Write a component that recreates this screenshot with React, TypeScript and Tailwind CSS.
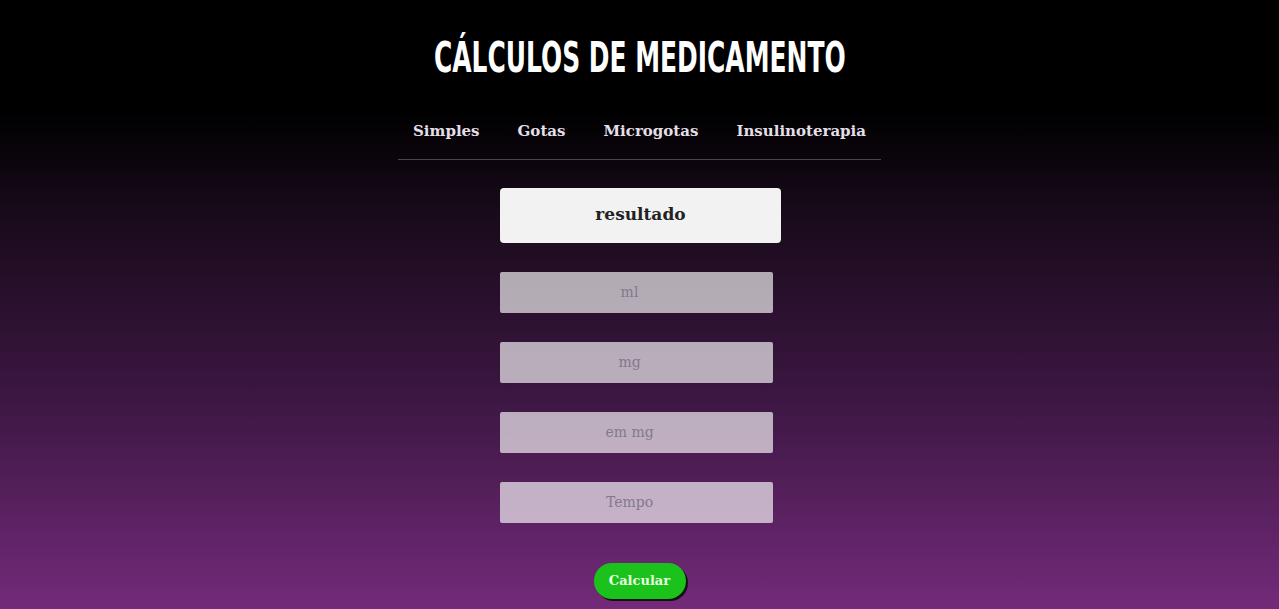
import React from "react";

const tabs = ["Simples", "Gotas", "Microgotas", "Insulinoterapia"];
const fields = ["ml", "mg", "em mg", "Tempo"];

export default function App() {
  return (
    <div className="min-h-[609px] w-full bg-[linear-gradient(to_bottom,#000000_0px,#000000_110px,#1a0b1c_220px,#3a1640_390px,#732a7a_609px)] font-['DejaVu_Serif',serif]">
      <div className="flex flex-col items-center">
        <h1 className="mt-[37px] scale-x-[0.66] font-['DejaVu_Sans_Condensed',sans-serif] text-[42px] font-bold leading-[42px] whitespace-nowrap text-white uppercase">
          Cálculos de Medicamento
        </h1>

        <nav className="mt-[41px] w-[483px] border-b border-[#4a4550] pb-[16px]">
          <ul className="flex justify-center gap-[38px] text-[15px] font-semibold text-[#e3dfe6]">
            {tabs.map((t) => (
              <li key={t}>{t}</li>
            ))}
          </ul>
        </nav>

        <div className="mt-[28px] ml-[2px] flex h-[55px] w-[281px] items-center justify-center rounded-[4px] bg-[#f2f2f2] text-[17px] font-bold text-[#222]">
          resultado
        </div>

        <div className="mt-[29px] ml-[2px] flex w-[281px] flex-col gap-[29px]">
          {fields.map((f) => (
            <input
              key={f}
              placeholder={f}
              className="h-[41px] w-[273px] rounded-[2px] bg-white/65 pr-[14px] text-center text-[14px] text-[#333] outline-none placeholder:text-[#83798a]"
            />
          ))}
        </div>

        <button className="mt-[40px] h-[36px] w-[92px] rounded-full bg-[#1cc21c] text-[13px] font-bold text-[#e8ffe0] shadow-[2px_2px_0_#111]">
          Calcular
        </button>
      </div>
    </div>
  );
}
